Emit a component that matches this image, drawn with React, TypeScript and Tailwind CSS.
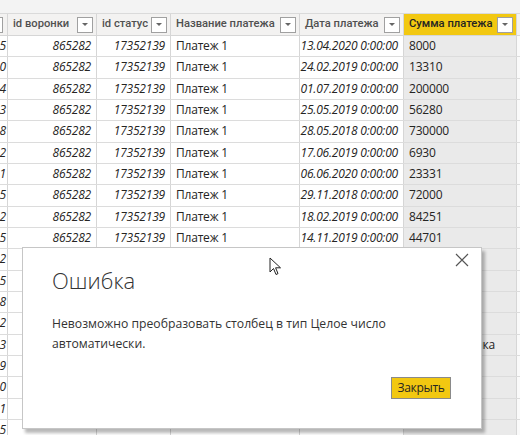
import React from "react";

const rows = [
  { a: "5", d: "13.04.2020 0:00:00", s: "8000" },
  { a: "0", d: "24.02.2019 0:00:00", s: "13310" },
  { a: "4", d: "01.07.2019 0:00:00", s: "200000" },
  { a: "3", d: "25.05.2019 0:00:00", s: "56280" },
  { a: "8", d: "28.05.2018 0:00:00", s: "730000" },
  { a: "2", d: "17.06.2019 0:00:00", s: "6930" },
  { a: "1", d: "06.06.2020 0:00:00", s: "23331" },
  { a: "5", d: "29.11.2018 0:00:00", s: "72000" },
  { a: "2", d: "18.02.2019 0:00:00", s: "84251" },
  { a: "5", d: "14.11.2019 0:00:00", s: "44701" },
  { a: "2", d: "", s: "" },
  { a: "5", d: "", s: "" },
  { a: "8", d: "", s: "" },
  { a: "2", d: "", s: "" },
  { a: "3", d: "", s: "Вид: рассрочка" },
  { a: "9", d: "", s: "" },
  { a: "0", d: "", s: "" },
  { a: "1", d: "", s: "" },
  { a: "5", d: "", s: "" },
];

function DropBtn() {
  return (
    <div className="w-[16px] h-[16px] shrink-0 border border-[#a0a0a0] bg-white flex items-center justify-center">
      <svg width="8" height="5" viewBox="0 0 8 5">
        <path d="M1 1 L7 1 L4 4 Z" fill="#666" />
      </svg>
    </div>
  );
}

function Head({ label, w, yellow }: { label: string; w: string; yellow?: boolean }) {
  return (
    <div
      className={`${w} shrink-0 h-full flex items-center justify-between pl-[5px] pr-[3px] border-r border-[#d6d6d6] ${
        yellow ? "bg-[#f2c811] text-[#252423]" : "text-[#505050]"
      } font-medium text-[11.2px]`}
      style={{ fontFamily: 'Roboto, "Noto Sans", sans-serif' }}
    >
      <span className="whitespace-nowrap">{label}</span>
      <DropBtn />
    </div>
  );
}

export default function App() {
  return (
    <div
      className="relative w-[520px] h-[435px] overflow-hidden bg-white text-[12px] text-[#252423]"
      style={{ fontFamily: '"Open Sans", "Noto Sans", sans-serif' }}
    >
      <div className="h-[14px] bg-[#f3f3f3] border-b border-[#dadada]" />
      <div className="h-[22px] flex bg-[#f3f2f1] border-b border-[#d6d6d6]">
        <div className="w-[8px] shrink-0 h-full border-r border-[#d6d6d6] flex items-center">
          <div className="w-[3px] h-[16px] border border-l-0 border-[#a0a0a0] bg-white" />
        </div>
        <Head label="id воронки" w="w-[89px]" />
        <Head label="id статус" w="w-[74px]" />
        <Head label="Название платежа" w="w-[129px]" />
        <Head label="Дата платежа" w="w-[104px]" />
        <Head label="Сумма платежа" w="w-[113px]" yellow />
        <div className="flex-1" />
      </div>
      {rows.map((r, i) => (
        <div key={i} className="h-[21.33px] flex border-b border-[#dcdcdc] tracking-[-0.2px]">
          <div className="w-[8px] shrink-0 border-r border-[#d6d6d6] flex items-center justify-end italic overflow-hidden pr-[1px]">
            <span>{r.a}</span>
          </div>
          <div className="w-[89px] shrink-0 border-r border-[#d6d6d6] flex items-center justify-end pr-[5px] italic">
            {i < 10 ? "865282" : ""}
          </div>
          <div className="w-[74px] shrink-0 border-r border-[#d6d6d6] flex items-center justify-end pr-[5px] italic">
            {i < 10 ? "17352139" : ""}
          </div>
          <div className="w-[129px] shrink-0 border-r border-[#d6d6d6] flex items-center pl-[5px]">
            {i < 10 ? "Платеж 1" : ""}
          </div>
          <div className="w-[104px] shrink-0 border-r border-[#d6d6d6] flex items-center justify-end pr-[5px] italic">
            {r.d}
          </div>
          <div className="w-[113px] shrink-0 border-r border-[#d6d6d6] bg-[#eaeaea] flex items-center pl-[5px] whitespace-nowrap overflow-hidden">
            {r.s}
          </div>
          <div className="flex-1 bg-[#fafafa]" />
        </div>
      ))}

      {/* dialog */}
      <div className="absolute left-[22px] top-[247px] w-[460px] h-[182px] bg-white border border-[#c6c6c6] shadow-[3px_4px_3px_rgba(0,0,0,0.28)] flex flex-col">
        <div className="flex justify-end pt-[5px] pr-[12px]">
          <svg width="14" height="14" viewBox="0 0 14 14">
            <path d="M1 1 L13 13 M13 1 L1 13" stroke="#555" strokeWidth="1.2" />
          </svg>
        </div>
        <div className="pl-[29px] pt-0 mt-[-2px] text-[22px] font-light text-[#333] leading-[30px]">Ошибка</div>
        <div className="pl-[29px] pt-[19px] pr-[60px] text-[12.2px] leading-[20px] text-[#333]">
          Невозможно преобразовать столбец в тип Целое число автоматически.
        </div>
        <div className="flex-1" />
        <div className="flex justify-end pr-[30px] pb-[29px]">
          <button className="w-[60px] h-[22px] bg-[#f2c811] border border-[#8a8a8a] text-[12px] text-[#252423] tracking-[-0.3px]">
            Закрыть
          </button>
        </div>
      </div>

      {/* cursor */}
      <svg className="absolute left-[269px] top-[257px]" width="14" height="20" viewBox="0 0 14 20">
        <path d="M1 1 L1 15 L4.5 11.5 L7 17.5 L9 16.6 L6.6 10.8 L11.5 10.8 Z" fill="white" stroke="#222" strokeWidth="1" strokeLinejoin="round" />
      </svg>
    </div>
  );
}
